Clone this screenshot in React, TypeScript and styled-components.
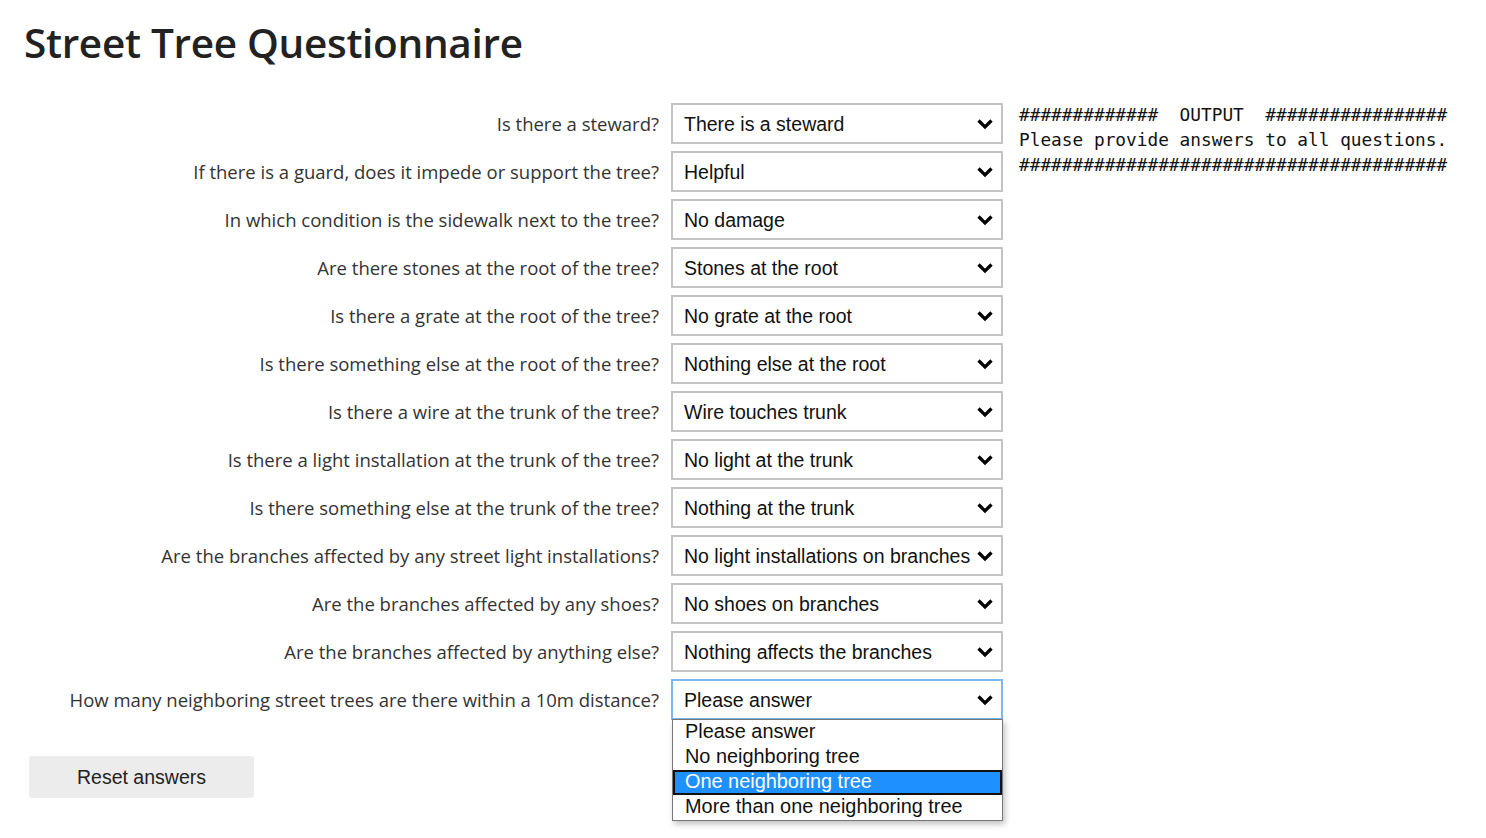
import React from "react";
import styled, { createGlobalStyle } from "styled-components";

const Global = createGlobalStyle`
  html, body { margin: 0; padding: 0; background: #fff; }
  body { font-family: "Open Sans", "Noto Sans", sans-serif; color: #222; }
`;

const Page = styled.div`
  box-sizing: border-box;
  min-height: 838px;
  padding: 14px 24px 0 24px;
`;

const Title = styled.h1`
  margin: 0 0 31px 0;
  font-family: "Open Sans", "Noto Sans", sans-serif;
  font-weight: 600;
  font-size: 40.5px;
  line-height: 58px;
  color: #222;
  letter-spacing: -0.3px;
`;

const Main = styled.div`
  display: flex;
  align-items: flex-start;
  gap: 16px;
`;

const Form = styled.div`
  display: grid;
  grid-template-columns: 635px 332px;
  column-gap: 12px;
  row-gap: 7px;
  align-items: center;
`;

const Label = styled.label`
  text-align: right;
  font-family: "Open Sans", "Noto Sans", sans-serif;
  font-weight: 400;
  font-size: 18.5px;
  color: #333;
  white-space: nowrap;
`;

const SelectWrap = styled.div`
  position: relative;
`;

const SelectBox = styled.div<{ $focused?: boolean }>`
  box-sizing: border-box;
  height: 41px;
  border: 2px solid ${(p) => (p.$focused ? "#7fb8f0" : "#c3c3c3")};
  background: #fff;
  display: flex;
  align-items: center;
  justify-content: space-between;
  padding: 2px 8px 0 11px;
  font-family: "Liberation Sans", Arial, sans-serif;
  font-size: 19.5px;
  color: #111;
  white-space: nowrap;
`;

const Chevron = () => (
  <svg width="16" height="10" viewBox="0 0 16 10" style={{ flexShrink: 0, marginTop: -2 }}>
    <path d="M1.5 1.5 L8 8 L14.5 1.5" fill="none" stroke="#000" strokeWidth="3.2" />
  </svg>
);

const ListBox = styled.ul`
  position: absolute;
  left: 1px;
  right: 0;
  top: 40px;
  margin: 0;
  padding: 0;
  list-style: none;
  background: #fff;
  border: 1px solid #777;
  box-shadow: 2px 3px 6px rgba(0, 0, 0, 0.25);
  z-index: 10;
`;

const Option = styled.li<{ $selected?: boolean }>`
  box-sizing: border-box;
  height: 25px;
  line-height: 19px;
  padding: 0 0 0 10px;
  font-family: "Liberation Sans", Arial, sans-serif;
  font-size: 19.9px;
  color: ${(p) => (p.$selected ? "#fff" : "#111")};
  background: ${(p) => (p.$selected ? "#1e90ff" : "transparent")};
  border: 2px solid ${(p) => (p.$selected ? "#111" : "transparent")};
  white-space: nowrap;
`;

const Output = styled.pre`
  margin: -1px 0 0 0;
  font-family: "DejaVu Sans Mono", "Liberation Mono", monospace;
  font-size: 17.8px;
  line-height: 25px;
  color: #111;
`;

const ResetButton = styled.button`
  display: block;
  margin: 36px 0 0 5px;
  width: 225px;
  height: 42px;
  border: none;
  border-radius: 3px;
  background: #ececec;
  font-family: "Liberation Sans", Arial, sans-serif;
  font-size: 19.5px;
  color: #222;
`;

const questions: [string, string][] = [
  ["Is there a steward?", "There is a steward"],
  ["If there is a guard, does it impede or support the tree?", "Helpful"],
  ["In which condition is the sidewalk next to the tree?", "No damage"],
  ["Are there stones at the root of the tree?", "Stones at the root"],
  ["Is there a grate at the root of the tree?", "No grate at the root"],
  ["Is there something else at the root of the tree?", "Nothing else at the root"],
  ["Is there a wire at the trunk of the tree?", "Wire touches trunk"],
  ["Is there a light installation at the trunk of the tree?", "No light at the trunk"],
  ["Is there something else at the trunk of the tree?", "Nothing at the trunk"],
  ["Are the branches affected by any street light installations?", "No light installations on branches"],
  ["Are the branches affected by any shoes?", "No shoes on branches"],
  ["Are the branches affected by anything else?", "Nothing affects the branches"],
  ["How many neighboring street trees are there within a 10m distance?", "Please answer"],
];

const options = [
  "Please answer",
  "No neighboring tree",
  "One neighboring tree",
  "More than one neighboring tree",
];

export default function App() {
  return (
    <Page>
      <Global />
      <Title>Street Tree Questionnaire</Title>
      <Main>
        <Form>
          {questions.map(([q, a], i) => {
            const last = i === questions.length - 1;
            return (
              <React.Fragment key={q}>
                <Label>{q}</Label>
                <SelectWrap>
                  <SelectBox $focused={last}>
                    <span>{a}</span>
                    <Chevron />
                  </SelectBox>
                  {last && (
                    <ListBox>
                      {options.map((o) => (
                        <Option key={o} $selected={o === "One neighboring tree"}>
                          {o}
                        </Option>
                      ))}
                    </ListBox>
                  )}
                </SelectWrap>
              </React.Fragment>
            );
          })}
        </Form>
        <Output>
          {"#############  OUTPUT  #################\nPlease provide answers to all questions.\n########################################"}
        </Output>
      </Main>
      <ResetButton>Reset answers</ResetButton>
    </Page>
  );
}
